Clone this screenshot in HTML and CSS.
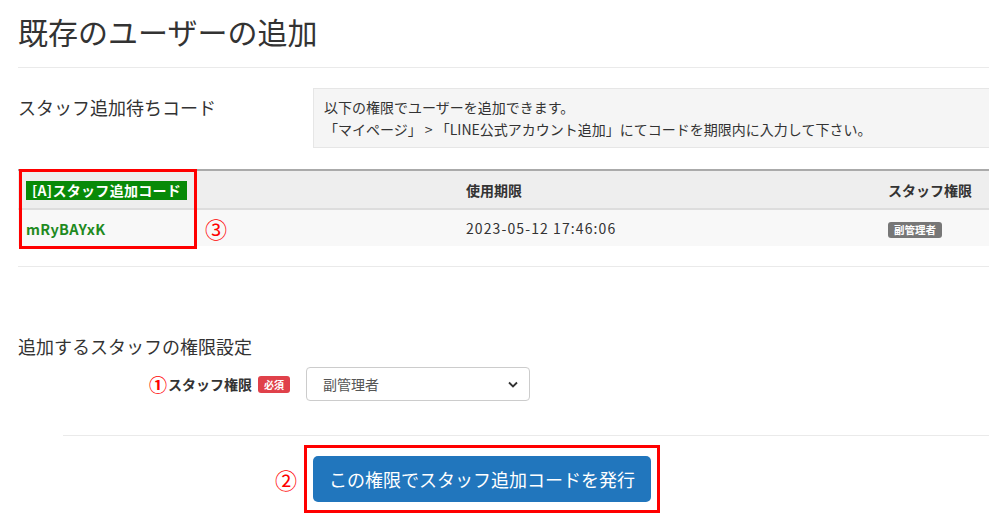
FILE: index.html
```html
<!DOCTYPE html>
<html lang="ja">
<head>
  <meta charset="UTF-8">
  <meta name="viewport" content="width=device-width, initial-scale=1.0">
  <title>既存のユーザーの追加</title>
  <link rel="stylesheet" href="styles.css">
</head>
<body>
  <div class="page">
    <h1 class="page-title">既存のユーザーの追加</h1>

    <div class="field-row">
      <div class="field-label">スタッフ追加待ちコード</div>
      <div class="info-box">
        <p>以下の権限でユーザーを追加できます。</p>
        <p>「マイページ」 &gt; 「LINE公式アカウント追加」にてコードを期限内に入力して下さい。</p>
      </div>
    </div>

    <div class="table-wrap">
      <table class="code-table">
        <thead>
          <tr>
            <th class="col-code"><span class="code-label">[A]スタッフ追加コード</span></th>
            <th class="col-limit">使用期限</th>
            <th>スタッフ権限</th>
          </tr>
        </thead>
        <tbody>
          <tr>
            <td class="code-value">mRyBAYxK</td>
            <td class="date">2023-05-12 17:46:06</td>
            <td><span class="role-badge">副管理者</span></td>
          </tr>
        </tbody>
      </table>
      <div class="mark-box table-mark"></div>
      <span class="num num-3">③</span>
    </div>

    <h2 class="section-title">追加するスタッフの権限設定</h2>

    <div class="form-row">
      <label class="form-label" for="role"><span class="num num-1">①</span>スタッフ権限<span class="required">必須</span></label>
      <div class="select-wrap">
        <select id="role" class="select">
          <option>副管理者</option>
          <option>管理者</option>
          <option>スタッフ</option>
        </select>
        <svg class="chevron" width="10" height="7" viewBox="0 0 10 7"><path d="M1 1.5 L5 5.5 L9 1.5" fill="none" stroke="#333" stroke-width="1.8"/></svg>
      </div>
    </div>

    <div class="form-actions">
      <span class="num num-2">②</span>
      <div class="mark-frame">
        <button class="btn-primary">この権限でスタッフ追加コードを発行</button>
      </div>
    </div>
  </div>
</body>
</html>
```

FILE: styles.css
```css
body {
  margin: 0;
  font-family: "Noto Sans CJK JP", "Liberation Sans", sans-serif;
  color: #333;
  background: #fff;
  overflow: hidden;
}
.page {
  width: 990px;
  padding-left: 18px;
}
.page-title {
  margin: 0;
  padding-top: 11px;
  padding-bottom: 16px;
  font-size: 30px;
  font-weight: normal;
  line-height: 40px;
  border-bottom: 1px solid #eaeaea;
}
.field-row {
  display: flex;
  margin-top: 20px;
}
.field-label {
  width: 295px;
  padding-top: 8px;
  font-size: 18px;
  line-height: 22px;
}
.info-box {
  flex: 1;
  background: #f5f5f5;
  border: 1px solid #e6e6e6;
  padding: 7px 10px;
  font-size: 14px;
  line-height: 22px;
}
.info-box p {
  margin: 0;
}
.table-wrap {
  position: relative;
  margin-top: 21px;
  padding-bottom: 20px;
  border-bottom: 1px solid #eaeaea;
}
.code-table {
  width: 100%;
  border-collapse: collapse;
  font-size: 14px;
}
.code-table th {
  height: 37px;
  padding: 0 8px;
  text-align: left;
  background: #eee;
  border-top: 2px solid #aaa;
  border-bottom: 2px solid #ddd;
  font-weight: bold;
}
.code-table td {
  height: 36px;
  padding: 0 8px;
  background: #f8f8f8;
}
.col-code {
  width: 424px;
}
.col-limit {
  width: 406px;
}
.code-label {
  display: inline-block;
  padding: 0 6px;
  background: #088a08;
  color: #fff;
  font-size: 14px;
  line-height: 19px;
  letter-spacing: 0.3px;
}
.code-value {
  color: #1f8a1f;
  font-weight: bold;
  font-size: 14.5px;
  letter-spacing: 0.3px;
}
.date {
  letter-spacing: 1.1px;
}
.role-badge {
  display: inline-block;
  padding: 0 6px;
  background: #777;
  color: #fff;
  font-size: 10.5px;
  font-weight: bold;
  line-height: 16px;
  border-radius: 3px;
}
.mark-box {
  position: absolute;
  border: 3px solid #f00;
}
.table-mark {
  left: 1px;
  top: 0;
  width: 172px;
  height: 74px;
}
.num {
  color: #f00;
  font-size: 22px;
  line-height: 1;
}
.num-3 {
  position: absolute;
  left: 187px;
  top: 48px;
}
.num-1 {
  font-size: 18px;
  margin-right: 1px;
}
.section-title {
  margin: 66px 0 0;
  font-size: 18px;
  font-weight: normal;
  line-height: 26px;
}
.form-row {
  display: flex;
  align-items: center;
  margin-top: 8px;
}
.form-label {
  width: 272px;
  display: flex;
  align-items: center;
  justify-content: flex-end;
  font-size: 14px;
  font-weight: bold;
  padding-right: 16px;
}
.required {
  margin-left: 6px;
  padding: 0 6px;
  background: #e0414a;
  color: #fff;
  font-size: 10px;
  line-height: 17px;
  border-radius: 3px;
}
.select-wrap {
  position: relative;
}
.select {
  width: 224px;
  height: 34px;
  padding: 0 16px;
  border: 1px solid #ccc;
  border-radius: 4px;
  background: #fff;
  font-family: inherit;
  font-size: 14px;
  color: #555;
  appearance: none;
  -webkit-appearance: none;
}
.chevron {
  position: absolute;
  right: 12px;
  top: 14px;
  pointer-events: none;
}
.form-actions {
  display: flex;
  align-items: center;
  gap: 7px;
  margin: 34px 0 0 45px;
  padding: 9px 0 0 212px;
  border-top: 1px solid #eaeaea;
}
.mark-frame {
  border: 3px solid #f00;
  padding: 8px 6px;
}
.btn-primary {
  display: block;
  width: 338px;
  height: 46px;
  border: none;
  border-radius: 5px;
  background: #2176bd;
  color: #fff;
  font-family: inherit;
  font-size: 18px;
  cursor: pointer;
}
```
